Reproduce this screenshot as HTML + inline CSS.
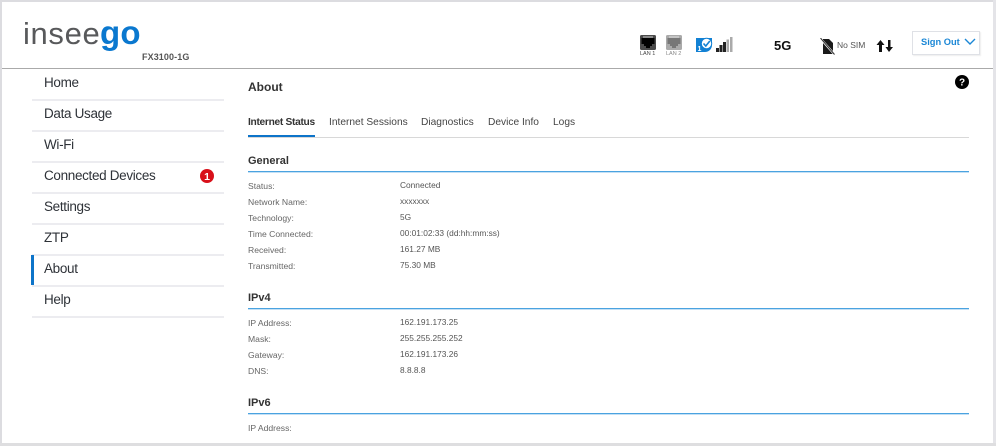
<!DOCTYPE html>
<html><head><meta charset="utf-8">
<style>
html,body{margin:0;padding:0;background:#fff}
#p{position:relative;width:996px;height:446px;overflow:hidden;background:#fff;font-family:"Liberation Sans",sans-serif;color:#333}
#p div,#p svg{position:absolute}
.t{white-space:nowrap;line-height:1}
.n{left:44px;font-size:13.5px;color:#2e3238;letter-spacing:-.33px}
.l{left:32px;width:192px;height:2px;background:#ececf0}
.k{left:248px;font-size:8.6px;color:#666}
.v{left:400px;font-size:8.35px;color:#555}
.h{left:248px;font-size:11px;font-weight:bold;color:#333}
.r{left:248px;width:721px;height:1px;background:#4aa3e0;box-shadow:0 1px 0 #c4e0f5}
.tab{font-size:10.2px;color:#444;top:118px}
</style></head><body><div id="p">
<div style="left:0;top:0;width:996px;height:2px;background:#dcdce0"></div>
<div style="left:0;top:0;width:2px;height:446px;background:#dcdce0"></div>
<div style="left:993px;top:0;width:3px;height:446px;background:#e4e4e8"></div>
<div style="left:0;top:443px;width:996px;height:3px;background:#dedee0"></div>
<div style="left:2px;top:68px;width:991px;height:1px;background:#aaa"></div>

<div class="t" style="left:23px;top:18px;font-size:31px;color:#58595b;letter-spacing:.65px">insee</div>
<div class="t" style="left:100px;top:16px;font-size:33px;font-weight:bold;color:#0a78cf;letter-spacing:.2px">go</div>
<div class="t" style="left:142px;top:53px;font-size:9px;font-weight:bold;color:#555;letter-spacing:.1px">FX3100-1G</div>

<svg style="left:640px;top:35px" width="16" height="15" viewBox="0 0 16 15"><rect width="16" height="15" rx="1.500" fill="#4a4a4a"/><path d="M1.500 3h13v6h-2.500v2h-2v2H6v-2H4V9H1.500z" fill="#000"/><path d="M3 2h10" stroke="#ccc" stroke-width="1"/></svg>
<div class="t" style="left:640px;top:52px;font-size:5.500px;color:#444">LAN 1</div>
<svg style="left:666px;top:35px" width="16" height="15" viewBox="0 0 16 15"><rect width="16" height="15" rx="1.500" fill="#aaa"/><path d="M1.500 3h13v6h-2.500v2h-2v2H6v-2H4V9H1.500z" fill="#777"/><path d="M3 2h10" stroke="#ddd" stroke-width="1"/></svg>
<div class="t" style="left:666px;top:52px;font-size:5.500px;color:#888">LAN 2</div>

<svg style="left:696px;top:37px" width="17" height="16" viewBox="0 0 17 16"><path d="M0 1h16v7a7 7 0 0 1-7 7H0z" fill="#1281d4"/><circle cx="10.500" cy="6.500" r="5.200" fill="#fff" stroke="#1281d4" stroke-width="1"/><path d="M7.500 6.500l2.300 2.500 4-5" fill="none" stroke="#1281d4" stroke-width="1.600"/><text x="1.500" y="14" font-size="7" font-family="Liberation Sans" font-weight="bold" fill="#fff">1</text></svg>
<svg style="left:716px;top:37px" width="17" height="15" viewBox="0 0 17 15"><rect x="0" y="11" width="3" height="4" fill="#222"/><rect x="3.500" y="8" width="3" height="7" fill="#222"/><rect x="7" y="5" width="3" height="10" fill="#222"/><rect x="10.500" y="2.500" width="2.500" height="12.500" fill="#aaa"/><rect x="14" y="0" width="2.500" height="15" fill="#aaa"/></svg>

<div class="t" style="left:774px;top:39px;font-size:13px;font-weight:bold;color:#111">5G</div>

<svg style="left:820px;top:38px" width="15" height="17" viewBox="0 0 15 17"><path d="M3 1h6l4 4v11H3z" fill="#1a1a1a"/><path d="M0 0L15 17" stroke="#fff" stroke-width="2.200"/><path d="M0.500 0L14.500 16.500" stroke="#333" stroke-width="1"/></svg>
<div class="t" style="left:837px;top:41px;font-size:8.500px;color:#555">No SIM</div>
<svg style="left:876px;top:40px" width="18" height="12" viewBox="0 0 18 12"><path d="M4.500 0L8.500 5H6v7H3V5H.5z" fill="#111"/><path d="M13 12L9.500 7H12V0h2.500v7H17z" fill="#111"/></svg>

<div style="left:912px;top:31px;width:66px;height:22px;border:1px solid #dfe1e6;box-shadow:1px 1px 1px #eee"></div>
<div class="t" style="left:921px;top:38px;font-size:9.300px;font-weight:bold;color:#1b87d6">Sign Out</div>
<svg style="left:964px;top:38px" width="12" height="8" viewBox="0 0 12 8"><path d="M1 1l5 5 5-5" fill="none" stroke="#1b87d6" stroke-width="1.400"/></svg>

<svg style="left:955px;top:75px" width="14" height="14" viewBox="0 0 14 14"><circle cx="7" cy="7" r="7" fill="#000"/><text x="7" y="10.500" text-anchor="middle" font-size="10" font-weight="bold" font-family="Liberation Sans" fill="#fff">?</text></svg>

<div class="t n" style="top:76px">Home</div><div class="l" style="top:99px"></div>
<div class="t n" style="top:107px">Data Usage</div><div class="l" style="top:130px"></div>
<div class="t n" style="top:138px">Wi-Fi</div><div class="l" style="top:161px"></div>
<div class="t n" style="top:169px">Connected Devices</div><div class="l" style="top:192px"></div>
<div class="t n" style="top:200px">Settings</div><div class="l" style="top:223px"></div>
<div class="t n" style="top:231px">ZTP</div><div class="l" style="top:254px"></div>
<div class="t n" style="top:262px">About</div><div class="l" style="top:285px"></div>
<div class="t n" style="top:293px">Help</div><div class="l" style="top:316px"></div>
<div style="left:31px;top:255px;width:3px;height:30px;background:#0d74c9"></div>
<svg style="left:200px;top:169px" width="14" height="14" viewBox="0 0 14 14"><circle cx="7" cy="7" r="7" fill="#d8101a"/><text x="7" y="10.800" text-anchor="middle" font-size="10.500" font-weight="bold" font-family="Liberation Sans" fill="#fff">1</text></svg>

<div class="t" style="left:248px;top:81px;font-size:12px;font-weight:bold;color:#333">About</div>

<div class="t tab" style="left:248px;font-weight:bold;color:#333;letter-spacing:-.3px">Internet Status</div>
<div class="t tab" style="left:329px">Internet Sessions</div>
<div class="t tab" style="left:421px">Diagnostics</div>
<div class="t tab" style="left:488px">Device Info</div>
<div class="t tab" style="left:553px">Logs</div>
<div style="left:248px;top:137px;width:721px;height:1px;background:#d8d8d8"></div>
<div style="left:248px;top:135px;width:67px;height:2px;background:#0d74c9"></div>

<div class="t h" style="top:156px">General</div><div class="r" style="top:171px"></div>
<div class="t k" style="top:182px">Status:</div><div class="t v" style="top:181px">Connected</div>
<div class="t k" style="top:198px">Network Name:</div><div class="t v" style="top:197px">xxxxxxx</div>
<div class="t k" style="top:214px">Technology:</div><div class="t v" style="top:213px">5G</div>
<div class="t k" style="top:230px">Time Connected:</div><div class="t v" style="top:229px">00:01:02:33 (dd:hh:mm:ss)</div>
<div class="t k" style="top:246px">Received:</div><div class="t v" style="top:245px">161.27 MB</div>
<div class="t k" style="top:262px">Transmitted:</div><div class="t v" style="top:261px">75.30 MB</div>

<div class="t h" style="top:293px">IPv4</div><div class="r" style="top:308px"></div>
<div class="t k" style="top:319px">IP Address:</div><div class="t v" style="top:318px">162.191.173.25</div>
<div class="t k" style="top:335px">Mask:</div><div class="t v" style="top:334px">255.255.255.252</div>
<div class="t k" style="top:351px">Gateway:</div><div class="t v" style="top:350px">162.191.173.26</div>
<div class="t k" style="top:367px">DNS:</div><div class="t v" style="top:366px">8.8.8.8</div>

<div class="t h" style="top:398px">IPv6</div><div class="r" style="top:413px"></div>
<div class="t k" style="top:424px">IP Address:</div>
</div></body></html>
